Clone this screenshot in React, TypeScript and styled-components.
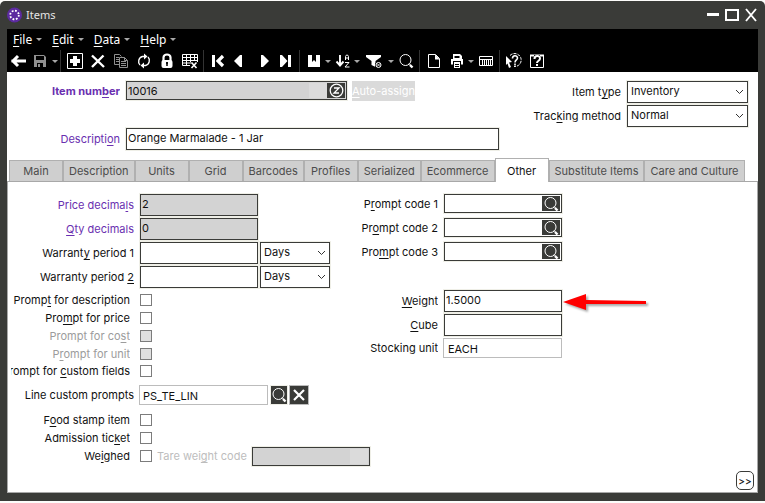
import React from "react";
import styled, { createGlobalStyle } from "styled-components";

const ui = `Inter, "Liberation Sans", sans-serif`;
const chrome = `"Noto Sans", "Open Sans", sans-serif`;
const dark = "#3a3b38";
const purple = "#6a2fb0";

const GlobalStyle = createGlobalStyle`
  *, *::before, *::after { box-sizing: border-box; }
  html { background: #fcfcfa; }
  body { margin: 0; font: 11px/16px ${ui}; color: #111; }
  button, input, select { font: inherit; color: inherit; margin: 0; }
  u { text-underline-offset: 2px; text-decoration-thickness: 1px; }
`;

const Window = styled.div`
  display: flex;
  flex-direction: column;
  min-height: calc(100vh - 3px);
  margin: 1px 0 2px;
  padding: 0 7px 8px;
  background: ${dark};
  border-radius: 5px 5px 0 0;
`;

const TitleBar = styled.header`
  display: flex;
  align-items: center;
  height: 28px;
  color: #e6e6e6;
  font-family: ${chrome};
`;

const Title = styled.h1`
  flex: 1;
  margin: 0 0 0 4px;
  font-size: 11px;
  font-weight: 400;
`;

const WindowButtons = styled.div`
  display: flex;
  gap: 6px;
  margin-right: 1px;
`;

const PlainButton = styled.button`
  display: flex;
  align-items: center;
  justify-content: center;
  padding: 0;
  border: 0;
  background: none;
  color: #fff;
`;

const MenuBar = styled.nav`
  display: flex;
  gap: 10px;
  height: 21px;
  padding-left: 6px;
  background: #000;
`;

const MenuButton = styled(PlainButton)`
  gap: 4px;
  font: 12px/16px ${chrome};
`;

const ToolBar = styled.div`
  display: flex;
  height: 22px;
  background: #000;
`;

const ToolButton = styled(PlainButton)<{ $width?: number; $before?: number; $dim?: boolean }>`
  width: ${(p) => p.$width ?? 23}px;
  margin-left: ${(p) => p.$before ?? 0}px;
  color: ${(p) => (p.$dim ? "#909090" : "#fff")};
`;

const Separator = styled.span`
  width: 1px;
  margin: 0 2px;
  background: #333;
`;

const Body = styled.main`
  flex: 1;
  display: flex;
  flex-direction: column;
  background: #fff;
`;

const Heading = styled.section`
  display: flex;
  justify-content: space-between;
  height: 86px;
  padding: 9px 10px 0 0;
`;

const Stack = styled.div<{ $gap?: number; $top?: number }>`
  display: flex;
  flex-direction: column;
  gap: ${(p) => p.$gap ?? 0}px;
  margin-top: ${(p) => p.$top ?? 0}px;
`;

const Row = styled.div<{ $height: number }>`
  display: flex;
  align-items: center;
  height: ${(p) => p.$height}px;
`;

const Label = styled.label<{ $width: number; $tone?: string; $bold?: boolean; $inset?: number }>`
  display: flex;
  justify-content: flex-end;
  flex: none;
  width: ${(p) => p.$width}px;
  margin-right: ${(p) => p.$inset ?? 6}px;
  overflow: hidden;
  white-space: pre;
  color: ${(p) => p.$tone ?? "inherit"};
  font-weight: ${(p) => (p.$bold ? 700 : 400)};
`;

const Box = styled.div<{ $width: number; $height: number; $filled?: boolean }>`
  display: flex;
  flex: none;
  width: ${(p) => p.$width}px;
  height: ${(p) => p.$height}px;
  padding: 1px;
  border: 1px solid ${dark};
  background: ${(p) => (p.$filled ? "#d3d3d3" : "#fff")};
  box-shadow: 0 0 0 1px #efefe7;
`;

const BoxInput = styled.input`
  flex: 1;
  min-width: 0;
  padding: 0;
  border: 0;
  background: none;
  outline: none;
`;

const Shade = styled.span`
  width: 18px;
  background: #dbdbdb;
`;

const TextInput = styled.input<{ $width: number; $height?: number; $filled?: boolean }>`
  flex: none;
  width: ${(p) => p.$width}px;
  height: ${(p) => p.$height ?? 22}px;
  padding: 0 1px 2px;
  border: 1px solid ${dark};
  background: ${(p) => (p.$filled ? "#d3d3d3" : "#fff")};
  box-shadow: 0 0 0 1px #efefe7;
  outline: none;
`;

const QuietInput = styled.input<{ $width: number; $pad: number }>`
  flex: none;
  width: ${(p) => p.$width}px;
  height: 20px;
  margin-left: -1px;
  padding: 1px ${(p) => p.$pad}px 0;
  border: 1px solid #bcbcbc;
  background: #fff;
  outline: none;
`;

const DarkButton = styled.button<{ $width?: number; $height?: number; $edge?: string }>`
  display: flex;
  align-items: center;
  justify-content: center;
  flex: none;
  width: ${(p) => p.$width ?? 18}px;
  height: ${(p) => p.$height ?? 15}px;
  padding: 0;
  border: ${(p) => (p.$edge ? `1px solid ${p.$edge}` : "0")};
  background: ${dark};
  color: #fff;
`;

const AssignButton = styled.button`
  height: 20px;
  margin-left: 5px;
  padding: 0;
  border: 0;
  background: #dadada;
  color: #fff;
`;

const SelectFrame = styled.span<{ $width: number }>`
  display: grid;
  flex: none;
  align-items: center;
  width: ${(p) => p.$width}px;
  height: 22px;
  > * { grid-area: 1 / 1; }
  > svg { justify-self: end; margin-right: 4px; pointer-events: none; }
`;

const SelectControl = styled.select`
  appearance: none;
  width: 100%;
  height: 22px;
  padding: 0 16px 2px 3px;
  border: 1px solid ${dark};
  border-radius: 0;
  background: #fff;
  box-shadow: 0 0 0 1px #efefe7;
  outline: none;
`;

const Check = styled.input`
  appearance: none;
  flex: none;
  width: 12px;
  height: 12px;
  border: 1px solid #7c7c7c;
  background: #fff;
  &:disabled { background: #e0e0e0; }
`;

const Tabs = styled.div`
  display: flex;
  align-items: flex-end;
  height: 23px;
  padding-left: 2px;
`;

const Tab = styled.button<{ $active?: boolean }>`
  position: relative;
  min-width: 54px;
  height: ${(p) => (p.$active ? 24 : 21)}px;
  margin-bottom: ${(p) => (p.$active ? -1 : 0)}px;
  padding: 0 5px;
  border: 1px solid #b0b0b0;
  border-bottom: 0;
  background: ${(p) => (p.$active ? "#fff" : "#cfcfcf")};
  color: ${(p) => (p.$active ? "#111" : "#4c4c4c")};
  white-space: nowrap;
`;

const Panel = styled.section`
  flex: 1;
  display: grid;
  grid-template-columns: 339px 1fr auto;
  padding: 12px 3px 2px;
  border: 1px solid #a8a8a8;
`;

const MoreButton = styled.button`
  align-self: end;
  width: 18px;
  height: 19px;
  padding: 0;
  border: 1px solid ${dark};
  border-radius: 5px;
  background: #fff;
  font-size: 10px;
  font-weight: 500;
`;

/* Text whose access key is the letter after "&". */
const Keyed = ({ text }: { text: string }) => {
  const at = text.indexOf("&");
  if (at < 0) return <span>{text}</span>;
  return (
    <span>
      {text.slice(0, at)}
      <u>{text[at + 1]}</u>
      {text.slice(at + 2)}
    </span>
  );
};

const Caret = () => (
  <svg width="6" height="3" viewBox="0 0 6 3" aria-hidden="true">
    <path d="M0 0h6L3 3z" fill="#a8a8a8" />
  </svg>
);

const Chevron = () => (
  <svg width="9" height="6" viewBox="0 0 9 6" fill="none" stroke="#333" aria-hidden="true">
    <path d="M1 1l3.5 3.5L8 1" />
  </svg>
);

const Icon = ({ children }: { children: React.ReactNode }) => (
  <svg width="16" height="16" viewBox="0 0 16 16" fill="none" stroke="currentColor" aria-hidden="true">
    {children}
  </svg>
);

const SearchIcon = () => (
  <Icon>
    <circle cx="7.5" cy="7" r="5.5" />
    <path d="M11 10.5l1.5 1.5" />
    <path d="M12 12l2.500 2.500" strokeWidth="2.4" />
  </Icon>
);

const icons: Record<string, React.ReactNode> = {
  Back: (
    <Icon>
      <path d="M1.5 8H16M8 3L3 8l5 5" strokeWidth="3" />
    </Icon>
  ),
  Save: (
    <Icon>
      <path d="M2 2h10l2 2v10H2z" fill="currentColor" stroke="none" />
      <path d="M4 3h8v4H4zM5 10h6v4H5z" fill="#000" stroke="none" />
      <path d="M6 11h2v3H6z" fill="currentColor" stroke="none" />
    </Icon>
  ),
  New: (
    <Icon>
      <path d="M.5 .5h15v15H.5z" />
      <path d="M8 3v10M3 8h10" strokeWidth="4" />
    </Icon>
  ),
  Delete: (
    <Icon>
      <path d="M2 2.5l12 11.5M13.5 2.5L2 14" strokeWidth="2.4" />
    </Icon>
  ),
  Copy: (
    <Icon>
      <path d="M6.5 11.5h-5v-10h5l2 2M3 4.5h3M3 6.5h3M3 8.5h3" />
      <path d="M6.5 4.5h5l3 3v7h-8z" fill="#000" />
      <path d="M11.5 4.5v3h3M8 8.5h5M8 10.5h5M8 12.5h5" />
    </Icon>
  ),
  Refresh: (
    <Icon>
      <path d="M4 12C1.500 9.500 2.500 4.500 6.500 3.500H9M12 4C14.500 6.500 13.500 11.500 9.500 12.500H7" strokeWidth="1.400" />
      <path d="M8 .5l3.500 3L8 6.500zM8 9.500l-3.500 3L8 15.500z" fill="currentColor" stroke="none" />
    </Icon>
  ),
  Lock: (
    <Icon>
      <path d="M4.500 8V4.500a3.500 3 0 0 1 7 0V8" strokeWidth="2.200" />
      <rect x="2.500" y="7" width="11" height="8" rx="2" fill="currentColor" stroke="none" />
      <path d="M8 9v4M7 10h2" stroke="#000" strokeWidth="1.500" />
    </Icon>
  ),
  "Clear grid": (
    <Icon>
      <path d="M8 12.500H.5v-11h15V9M.5 4.500h15M.5 7.500h15M.5 10h9M4.500 2v10M8.500 2v7M12.500 2v6" />
      <path d="M9.500 9.500l5 5.500M14.500 9.500l-5 5.500" strokeWidth="1.600" />
    </Icon>
  ),
  First: (
    <Icon>
      <path d="M2 2h3v12H2z" fill="currentColor" stroke="none" />
      <path d="M13 3L8 8l5 5" strokeWidth="3.200" />
    </Icon>
  ),
  Previous: (
    <Icon>
      <path d="M12 2v12h-2L4 8l6-6z" fill="currentColor" stroke="none" />
    </Icon>
  ),
  Next: (
    <Icon>
      <path d="M4 2v12h2l6-6-6-6z" fill="currentColor" stroke="none" />
    </Icon>
  ),
  Last: (
    <Icon>
      <path d="M2 2h2l5.500 6L4 14H2zM10 2h3v12h-3z" fill="currentColor" stroke="none" />
    </Icon>
  ),
  Bookmark: (
    <Icon>
      <path d="M2 2h4v7l2-2 2 2V2h4v12H2z" fill="currentColor" stroke="none" />
    </Icon>
  ),
  Sort: (
    <Icon>
      <path d="M5 2v11M1.500 8.500L5 12.500l3.500-4" strokeWidth="1.900" />
      <path d="M10.500 7V3.500l1-1.500h1l1 1.500V7M10.500 5h3M10 9.500h4l-4 4.500h4.500" />
    </Icon>
  ),
  Filter: (
    <Icon>
      <path d="M0 2h15v2L9.500 8v6l-4-2V8L0 4z" fill="currentColor" stroke="none" />
      <circle cx="12.500" cy="12" r="3.500" fill="#000" stroke="none" />
      <circle cx="12.500" cy="12" r="2.500" />
      <path d="M11 10.500l3 3M14 10.500l-3 3" strokeWidth=".8" />
    </Icon>
  ),
  Find: <SearchIcon />,
  Page: (
    <Icon>
      <path d="M2.500 1.500h7l4 4v9h-11z" />
      <path d="M9 1.500v5h5z" fill="currentColor" stroke="none" />
    </Icon>
  ),
  Print: (
    <Icon>
      <path d="M4 1h7l2 2v3H4z" fill="currentColor" stroke="none" />
      <path d="M5.500 3h5v2h-5z" fill="#000" stroke="none" />
      <path d="M2 6h12v5.500H2z" fill="currentColor" stroke="none" />
      <path d="M4 8h8v7.500H4z" fill="#000" stroke="none" />
      <path d="M5 9h6v6H5z" fill="currentColor" stroke="none" />
      <path d="M6 11.500h4M6 13.500h4" stroke="#000" />
    </Icon>
  ),
  Table: (
    <Icon>
      <path d="M1.500 3.500h13v9h-13zM2 6.500h12M4.500 7v5M6.500 7v5M8.500 7v5M10.500 7v5M12.500 7v5" />
    </Icon>
  ),
  "Help pointer": (
    <Icon>
      <path d="M4 2.500A6.500 6.500 0 1 1 8 13.500" strokeDasharray="3 1" />
      <path d="M6.500 5.500c0-3.500 5-3.500 5-.5C11.500 7 9 7 9 9.500M9 10.500v2" strokeWidth="1.600" />
      <path d="M0 3l6 6-3 .5L5 14l-2 1-1.500-4.500L0 12z" fill="currentColor" stroke="none" />
    </Icon>
  ),
  "Help window": (
    <Icon>
      <path d="M1.500 2.500h13v12h-13z" />
      <path d="M1 1.500h14v2H1z" fill="currentColor" stroke="none" />
      <path d="M5 2h6v3H5z" fill="#000" stroke="none" />
      <path d="M5.500 6c0-4 5.500-4 5.500-.5C11 8 8 7.500 8 10M8 11v2" strokeWidth="2" />
    </Icon>
  ),
};

type Tool = { name?: string; width?: number; before?: number; dim?: boolean; menu?: boolean };

const tools: Tool[] = [
  { name: "Back", width: 21 },
  { name: "Save", width: 24, dim: true, menu: true },
  {},
  { name: "New" },
  { name: "Delete" },
  { name: "Copy", dim: true },
  { name: "Refresh" },
  { name: "Lock" },
  { name: "Clear grid" },
  {},
  { name: "First" },
  { name: "Previous", width: 18 },
  { name: "Next", width: 18, before: 9 },
  { name: "Last" },
  {},
  { name: "Bookmark", menu: true },
  { name: "Sort", menu: true },
  { name: "Filter", width: 28, menu: true },
  { name: "Find" },
  {},
  { name: "Page" },
  { name: "Print", menu: true },
  { name: "Table" },
  {},
  { name: "Help pointer" },
  { name: "Help window" },
];

const Select = ({ id, width, value }: { id: string; width: number; value: string }) => (
  <SelectFrame $width={width}>
    <SelectControl id={id} aria-label={id} defaultValue={value}>
      <option>{value}</option>
    </SelectControl>
    <Chevron />
  </SelectFrame>
);

const CheckRow = ({ id, text, off, height = 18, children }: {
  id: string; text: string; off?: boolean; height?: number; children?: React.ReactNode;
}) => (
  <Row $height={height}>
    <Label htmlFor={id} $width={119} $inset={10} $tone={off ? "#9c9c9c" : undefined}>
      <Keyed text={text} />
    </Label>
    <Check id={id} type="checkbox" disabled={off} />
    {children}
  </Row>
);

const TareLabel = styled.label`
  flex: none;
  width: 95px;
  margin-left: 5px;
  color: #bdbdbd;
  white-space: nowrap;
`;

const LineActions = styled.div`
  display: flex;
  gap: 1px;
  margin-left: 2px;
`;

const Arrow = styled.svg`
  flex: none;
  margin-left: 1px;
  filter: drop-shadow(2px 2px 1px rgba(0, 0, 0, 0.35));
`;

const tabs = ["Main", "Description", "Units", "Grid", "Barcodes", "Profiles", "Serialized", "Ecommerce", "Other", "Substitute Items", "Care and Culture"];

export default function App() {
  return (
    <>
      <GlobalStyle />
      <Window>
        <TitleBar>
          <svg width="15" height="16" viewBox="0 0 15 16" aria-hidden="true">
            <circle cx="7.500" cy="8" r="7.500" fill="#5c2aa0" />
            <circle cx="7.500" cy="8" r="4.300" fill="none" stroke="#fff" strokeWidth="1.800" strokeDasharray="1.800 1.577" />
          </svg>
          <Title>Items</Title>
          <WindowButtons>
            <PlainButton aria-label="Minimize">
              <svg width="12" height="14" viewBox="0 0 12 14"><path d="M0 5h12v3H0z" fill="#fff" /></svg>
            </PlainButton>
            <PlainButton aria-label="Maximize">
              <svg width="14" height="14" viewBox="0 0 14 14"><path d="M1 2h12v10H1z" fill="none" stroke="#fff" strokeWidth="2" /></svg>
            </PlainButton>
            <PlainButton aria-label="Close">
              <svg width="12" height="14" viewBox="0 0 12 14"><path d="M1 1l10 12M11 1L1 13" fill="none" stroke="#fff" strokeWidth="1.900" /></svg>
            </PlainButton>
          </WindowButtons>
        </TitleBar>
        <MenuBar>
          {["&File", "&Edit", "&Data", "&Help"].map((m) => (
            <MenuButton key={m}><Keyed text={m} /><Caret /></MenuButton>
          ))}
        </MenuBar>
        <ToolBar role="toolbar">
          {tools.map((t, i) =>
            t.name ? (
              <React.Fragment key={i}>
                <ToolButton aria-label={t.name} $width={t.width} $before={t.before} $dim={t.dim}>{icons[t.name]}</ToolButton>
                {t.menu && <ToolButton aria-label={`${t.name} options`} $width={6}><Caret /></ToolButton>}
              </React.Fragment>
            ) : (
              <Separator key={i} />
            )
          )}
        </ToolBar>
        <Body>
          <Heading>
            <Stack $gap={28}>
              <Row $height={19}>
                <Label htmlFor="number" $width={113} $tone={purple} $bold><Keyed text="Item num&ber" /></Label>
                <Box $width={221} $height={19} $filled>
                  <BoxInput id="number" defaultValue="10016" />
                  <Shade />
                  <DarkButton aria-label="Zoom">
                    <svg width="15" height="15" viewBox="0 0 15 15" fill="none" stroke="#fff">
                      <circle cx="7.500" cy="7.500" r="6.300" strokeWidth="1.300" />
                      <path d="M5 5h5l-5 5h5" strokeWidth="1.300" />
                    </svg>
                  </DarkButton>
                </Box>
                <AssignButton><Keyed text="&Auto-assign" /></AssignButton>
              </Row>
              <Row $height={22}>
                <Label htmlFor="description" $width={113} $tone={purple}><Keyed text="Descripti&on" /></Label>
                <TextInput id="description" $width={373} defaultValue="Orange Marmalade - 1 Jar" />
              </Row>
            </Stack>
            <Stack $gap={2}>
              <Row $height={22}>
                <Label htmlFor="Item type" $width={100}><Keyed text="Item t&ype" /></Label>
                <Select id="Item type" width={121} value="Inventory" />
              </Row>
              <Row $height={22}>
                <Label htmlFor="Tracking method" $width={100}><Keyed text="Trac&king method" /></Label>
                <Select id="Tracking method" width={121} value="Normal" />
              </Row>
            </Stack>
          </Heading>
          <Tabs role="tablist">
            {tabs.map((t) => (
              <Tab key={t} role="tab" aria-selected={t === "Other"} $active={t === "Other"}>{t}</Tab>
            ))}
          </Tabs>
          <Panel>
            <Stack>
              <Stack $gap={2}>
                <Row $height={22}>
                  <Label htmlFor="price" $width={123} $tone={purple}><Keyed text="Price decima&ls" /></Label>
                  <TextInput id="price" $width={118} $filled defaultValue="2" />
                </Row>
                <Row $height={22}>
                  <Label htmlFor="qty" $width={123} $tone={purple}><Keyed text="&Qty decimals" /></Label>
                  <TextInput id="qty" $width={118} $filled defaultValue="0" />
                </Row>
                {["Warrant&y period 1", "Warranty period &2"].map((w, i) => (
                  <Row key={w} $height={22}>
                    <Label htmlFor={`warranty${i}`} $width={123}><Keyed text={w} /></Label>
                    <TextInput id={`warranty${i}`} $width={118} />
                    <LineActions><Select id={`Warranty unit ${i + 1}`} width={70} value="Days" /></LineActions>
                  </Row>
                ))}
              </Stack>
              <Stack $top={3}>
                <CheckRow id="p-desc" text="Promp&t for description" />
                <CheckRow id="p-price" text="Pro&mpt for price" />
                <CheckRow id="p-cost" text="Prompt for co&st" off />
                <CheckRow id="p-unit" text="P&rompt for unit" off />
                <CheckRow id="p-custom" text="Prompt for &custom fields" height={16} />
              </Stack>
              <Stack $top={6}>
                <Row $height={20}>
                  <Label htmlFor="line" $width={123}>Line custom prompts</Label>
                  <QuietInput id="line" $width={129} $pad={3} readOnly value="PS_TE_LIN" />
                  <LineActions>
                    <DarkButton aria-label="Look up prompts" $height={20} $edge="#efefe7"><SearchIcon /></DarkButton>
                    <DarkButton aria-label="Clear prompts" $width={20} $height={20} $edge="#bcbcbc">
                      <svg width="14" height="14" viewBox="0 0 14 14"><path d="M2 2l10 10M12 2L2 12" stroke="#fff" strokeWidth="2.200" /></svg>
                    </DarkButton>
                  </LineActions>
                </Row>
              </Stack>
              <Stack $top={6}>
                <CheckRow id="food" text="F&ood stamp item" />
                <CheckRow id="ticket" text="Admission tic&ket" />
                <CheckRow id="weighed" text="We&ighed">
                  <TareLabel htmlFor="tare"><Keyed text="Tare wei&ght code" /></TareLabel>
                  <Box $width={118} $height={19} $filled>
                    <BoxInput id="tare" disabled />
                    <Shade />
                  </Box>
                </CheckRow>
              </Stack>
            </Stack>
            <Stack>
              <Stack $gap={5}>
                {["P&rompt code 1", "Pr&ompt code 2", "Pro&mpt code 3"].map((c, i) => (
                  <Row key={c} $height={19}>
                    <Label htmlFor={`code${i}`} $width={88}><Keyed text={c} /></Label>
                    <Box $width={118} $height={19}>
                      <BoxInput id={`code${i}`} />
                      <DarkButton aria-label="Look up code"><SearchIcon /></DarkButton>
                    </Box>
                  </Row>
                ))}
              </Stack>
              <Stack $gap={2} $top={29}>
                <Row $height={22}>
                  <Label htmlFor="weight" $width={88}><Keyed text="&Weight" /></Label>
                  <TextInput id="weight" $width={118} defaultValue="1.5000" />
                  <Arrow width="84" height="18" viewBox="0 0 84 18" aria-hidden="true">
                    <path d="M0 10L23 2v6l60 1v3H23v6z" fill="#ff0000" />
                  </Arrow>
                </Row>
                <Row $height={22}>
                  <Label htmlFor="cube" $width={88}><Keyed text="&Cube" /></Label>
                  <TextInput id="cube" $width={118} />
                </Row>
                <Row $height={20}>
                  <Label htmlFor="unit" $width={88}>Stocking unit</Label>
                  <QuietInput id="unit" $width={119} $pad={4} readOnly value="EACH" />
                </Row>
              </Stack>
            </Stack>
            <MoreButton aria-label="More">&gt;&gt;</MoreButton>
          </Panel>
        </Body>
      </Window>
    </>
  );
}
